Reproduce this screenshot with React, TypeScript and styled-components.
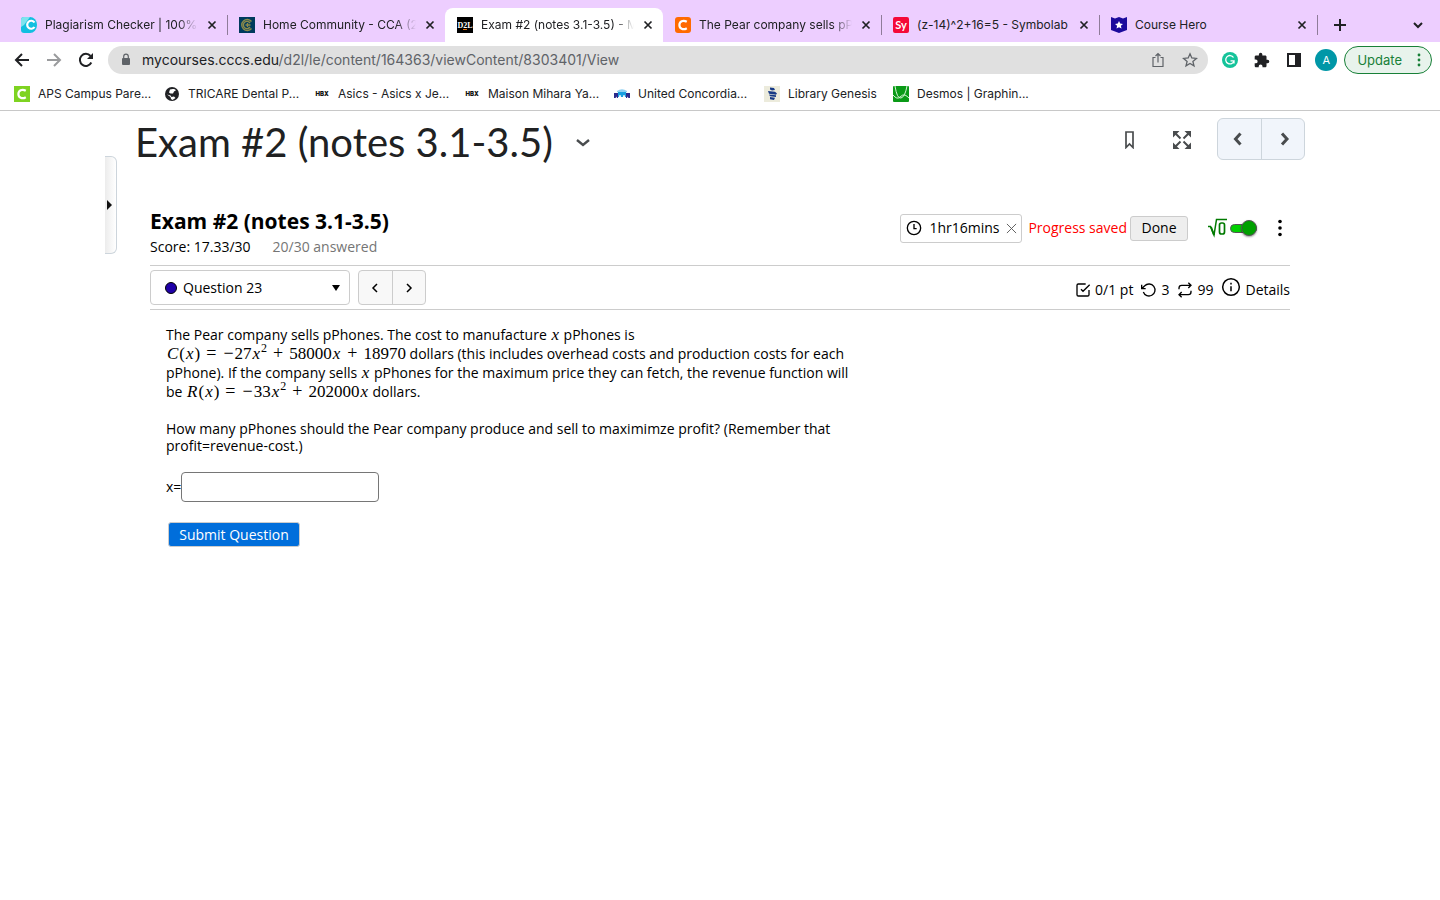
import React from "react";
import styled, { createGlobalStyle } from "styled-components";

const Global = createGlobalStyle`
  *, *::before, *::after { box-sizing: border-box; }
  body { margin: 0; background: #fff; color: #000; }
  button, input, select { font: inherit; color: inherit; margin: 0; }
  button { cursor: pointer; padding: 0; border: 0; background: none; }
  a { color: inherit; text-decoration: none; }
  svg { display: block; flex: none; }
`;

const UI_FONT = `Inter, sans-serif`;
const BODY_FONT = `"Trebuchet MS", "Open Sans", sans-serif`;

/* ---------- browser chrome ---------- */

const Chrome = styled.header`
  font-family: ${UI_FONT};
  font-size: 12px;
  line-height: 16px;
  color: #202124;
  border-bottom: 1px solid #c8c8c8;
`;

const TabStrip = styled.nav`
  display: flex;
  align-items: flex-end;
  height: 42px;
  padding: 8px 14px 0 9px;
  background: #edceff;
`;

const Tab = styled.div<{ $active?: boolean; $divider?: boolean }>`
  flex: 0 1 218px;
  min-width: 0;
  height: 34px;
  display: flex;
  align-items: center;
  gap: 8px;
  padding: 0 9px 0 12px;
  position: relative;
  background: ${(p) => (p.$active ? "#fff" : "transparent")};
  border-radius: 8px 8px 0 0;
  ${(p) =>
    p.$divider &&
    `&::after { content: ""; position: absolute; right: -1px; top: 7px; width: 1px; height: 20px; background: #8f7c99; }`}
`;

const TabTitle = styled.a<{ $fade?: boolean }>`
  flex: 1;
  min-width: 0;
  overflow: hidden;
  white-space: nowrap;
  ${(p) => p.$fade && `mask-image: linear-gradient(to right, #000 calc(100% - 20px), transparent);`}
`;

const TabClose = styled.button`
  width: 12px;
  height: 12px;
  display: grid;
  place-items: center;
`;

const StripButton = styled.button<{ $push?: boolean }>`
  width: 16px;
  height: 34px;
  margin-left: ${(p) => (p.$push ? "auto" : "15px")};
  display: grid;
  place-items: center;
`;

const Toolbar = styled.div`
  display: flex;
  align-items: center;
  height: 36px;
  padding: 0 8px 0 14px;
  gap: 16px;
`;

const Omnibox = styled.div`
  flex: 1;
  display: flex;
  align-items: center;
  height: 28px;
  margin: 0 -2px;
  padding: 0 10px;
  gap: 16px;
  border-radius: 14px;
  background: #e0e0e0;
`;

const Url = styled.span`
  flex: 1;
  margin-left: -8px;
  font-size: 14px;
  color: #5f6368;
  b { font-weight: 400; color: #202124; }
`;

const IconButton = styled.button`
  width: 16px;
  height: 16px;
  display: grid;
  place-items: center;
`;

const Avatar = styled.button`
  width: 22px;
  height: 22px;
  margin-left: -3px;
  border-radius: 50%;
  background: #0097a7;
  color: #fff;
  font-size: 11px;
`;

const UpdateButton = styled.button`
  display: flex;
  align-items: center;
  gap: 15px;
  height: 28px;
  margin-left: -9px;
  padding: 0 10px 0 12px;
  border: 1px solid #188038;
  border-radius: 14px;
  background: #e8f3ec;
  color: #188038;
  font-size: 13px;
`;

const Bookmarks = styled.nav`
  display: flex;
  align-items: center;
  gap: 16px;
  height: 32px;
  padding: 0 14px;
`;

const Bookmark = styled.a<{ $short?: boolean }>`
  width: ${(p) => (p.$short ? "113px" : "134px")};
  display: flex;
  align-items: center;
  gap: 8px;
  white-space: nowrap;
`;

/* ---------- page ---------- */

const Main = styled.main`
  position: relative;
  max-width: 1230px;
  margin: 0 auto;
  padding: 0 30px;
`;

const PanelHandle = styled.button`
  position: absolute;
  left: 0;
  top: 45px;
  width: 12px;
  height: 98px;
  display: flex;
  align-items: center;
  border: 1px solid #cdd5dc;
  border-left: 0;
  border-radius: 0 6px 6px 0;
  background: linear-gradient(to right, #ececec, #fff);
`;

const PageHeader = styled.div`
  display: flex;
  align-items: center;
  height: 62px;
`;

const PageTitle = styled.h1`
  margin: 0;
  font: 400 40px/48px Lato, sans-serif;
  color: #202122;
  white-space: nowrap;
`;

const TitleMenu = styled.button`
  margin-left: 22px;
`;

const PageActions = styled.div`
  margin-left: auto;
  display: flex;
  align-items: center;
  gap: 36px;
  padding-bottom: 6px;
`;

const Pager = styled.div`
  display: flex;
  height: 42px;
  margin-left: -8px;
  border: 1px solid #cdd5dc;
  border-radius: 6px;
  background: #f1f5fb;
  overflow: hidden;
`;

const PagerButton = styled.button`
  width: 43px;
  display: grid;
  place-items: center;
  & + & { border-left: 1px solid #cdd5dc; }
`;

const Assessment = styled.section`
  margin: 34px 15px 0;
  font-family: ${BODY_FONT};
  font-size: 14px;
  line-height: 18px;
`;

const AssessmentHeader = styled.div`
  display: flex;
  align-items: flex-start;
  height: 58px;
`;

const AssessmentTitle = styled.h2`
  margin: 0;
  font-size: 21px;
  line-height: 28px;
  font-weight: 700;
`;

const Score = styled.div`
  display: flex;
  gap: 22px;
  padding-top: 3px;
`;

const Muted = styled.span`
  color: #757575;
`;

const Status = styled.div`
  margin-left: auto;
  display: flex;
  align-items: center;
  height: 42px;
`;

const Timer = styled.div`
  display: flex;
  align-items: center;
  gap: 7px;
  height: 29px;
  width: 122px;
  padding: 0 8px 0 5px;
  margin-right: 6px;
  border: 1px solid #ccc;
  border-radius: 3px;
`;

const TimerClose = styled.button`
  margin-left: auto;
`;

const Saved = styled.span`
  color: #f00;
  margin-right: 3px;
`;

const DoneButton = styled.button`
  width: 58px;
  height: 25px;
  border: 1px solid #ccc;
  border-radius: 3px;
  background: #eee;
`;

const MathSwitch = styled.label`
  display: flex;
  align-items: center;
  gap: 3px;
  margin-left: 20px;
`;

const Switch = styled.input`
  appearance: none;
  position: relative;
  width: 27px;
  height: 9px;
  border: 1px solid #555;
  border-radius: 5px;
  background: #00d000;
  &::after {
    content: "";
    position: absolute;
    right: -1px;
    top: -5px;
    width: 16px;
    height: 16px;
    border: 1px solid #555;
    border-radius: 50%;
    background: #00a000;
    box-shadow: 0 1px 2px #0006;
  }
`;

const MoreButton = styled.button`
  margin: 0 8px 0 21px;
`;

const QuestionBar = styled.div`
  display: flex;
  align-items: center;
  height: 45px;
  border-top: 1px solid #ccc;
  border-bottom: 1px solid #ccc;
`;

const QuestionPicker = styled.label`
  display: flex;
  align-items: center;
  gap: 6px;
  width: 200px;
  height: 35px;
  padding: 0 9px 0 14px;
  border: 1px solid #ccc;
  border-radius: 4px;
`;

const QuestionSelect = styled.select`
  flex: 1;
  appearance: none;
  border: 0;
  padding: 0;
  background: none;
`;

const StepButtons = styled.div`
  display: flex;
  width: 68px;
  height: 35px;
  margin-left: 8px;
  border: 1px solid #ccc;
  border-radius: 4px;
  background: #f8f8f8;
  overflow: hidden;
`;

const StepButton = styled.button`
  flex: 1;
  display: grid;
  place-items: center;
  & + & { border-left: 1px solid #ccc; }
`;

const Facts = styled.div`
  margin-left: auto;
  display: flex;
  align-items: center;
  gap: 8px;
  padding-top: 5px;
`;

const Fact = styled.span`
  display: flex;
  align-items: center;
  gap: 4px;
`;

const DetailsButton = styled.button`
  display: flex;
  align-items: center;
  gap: 4px;
  svg { margin-bottom: 6px; }
`;

const Question = styled.form`
  padding: 15px 16px;
`;

const Statement = styled.p`
  margin: 0 0 19px;
  line-height: 19px;
  white-space: nowrap;
`;

const Ask = styled.p`
  margin: 0;
  line-height: 17px;
  white-space: nowrap;
`;

const Formula = styled.span`
  font: 17px/17px "Liberation Serif", serif;
  i { margin: 0 1px; }
  sup { font-size: 12px; line-height: 0; }
`;

const Op = styled.span<{ $unary?: boolean }>`
  margin: 0 ${(p) => (p.$unary ? "1px" : "6px")};
  font-size: 18px;
`;

const Answer = styled.label`
  display: flex;
  align-items: center;
  margin-top: 18px;
`;

const AnswerInput = styled.input`
  width: 198px;
  height: 30px;
  padding: 0 6px;
  border: 1px solid #767676;
  border-radius: 4px;
  background: #fff;
`;

const SubmitButton = styled.button`
  display: block;
  width: 132px;
  height: 25px;
  margin: 20px 2px 0;
  border: 1px solid #ccc;
  border-radius: 3px;
  background: #006edb;
  color: #fff;
`;

/* ---------- icons ---------- */

const Stroke = ({ d, size = 16, box = 24, w = 2, color = "currentColor" }: { d: string; size?: number; box?: number; w?: number; color?: string }) => (
  <svg width={size} height={size} viewBox={`0 0 ${box} ${box}`} fill="none" stroke={color} strokeWidth={w} aria-hidden="true">
    <path d={d} />
  </svg>
);

const Close = () => <Stroke d="M2.500 2.500l7 7M9.500 2.500l-7 7" size={12} box={12} w={1.700} />;

const Letter = ({ bg, text, size = 12, family = "Lato", r = 2, fill = "#fff" }: { bg: string; text: string; size?: number; family?: string; r?: number; fill?: string }) => (
  <svg width="16" height="16" viewBox="0 0 16 16" aria-hidden="true">
    <rect width="16" height="16" rx={r} fill={bg} />
    <text x="8" y={8 + size * 0.36} fontSize={size} fontFamily={family} fontWeight="700" fill={fill} textAnchor="middle">{text}</text>
  </svg>
);

const CBadge = ({ bg, r = 3 }: { bg: string; r?: number }) => (
  <svg width="16" height="16" viewBox="0 0 16 16" aria-hidden="true">
    <rect width="16" height="16" rx={r} fill={bg} />
    <path d="M11.800 4.800C8 2.500 4.400 4.500 4.400 8s3.600 5.500 7.400 3.200" fill="none" stroke="#fff" strokeWidth="2.200" />
  </svg>
);

const Plagiarism = () => (
  <svg width="16" height="16" viewBox="0 0 16 16" aria-hidden="true">
    <path d="M0 3a3 3 0 0 1 3-3h6a7 8 0 0 1 0 16H3a3 3 0 0 1-3-3z" fill="#12bfe0" />
    <path d="M0 3a3 3 0 0 1 3-3h6L3 8l-3 2z" fill="#7fe3ee" />
    <path d="M13.500 5.500A4 4 0 1 0 13.500 10" fill="none" stroke="#fff" strokeWidth="2.200" />
  </svg>
);

const Cca = () => (
  <svg width="16" height="16" viewBox="0 0 16 16" fill="none" aria-hidden="true">
    <rect width="16" height="16" fill="#003a5d" />
    <path d="M12.500 4.500a5.500 5.500 0 1 0 0 7M11 6a3.600 3.600 0 1 0 0 4M6.500 8h5M8.500 6v4" stroke="#8c8b4a" strokeWidth="1.400" />
  </svg>
);

const D2l = () => (
  <svg width="16" height="16" viewBox="0 0 16 16" aria-hidden="true">
    <rect width="16" height="16" fill="#000" />
    <text x="8" y="11" fontSize="8" fontFamily="Liberation Serif" fontWeight="700" fill="#fff" textAnchor="middle">D2L</text>
    <path d="M6 12.500h4" stroke="#e87511" />
  </svg>
);

const Hero = () => (
  <svg width="16" height="16" viewBox="0 0 16 16" aria-hidden="true">
    <path d="M0 0l4 1.500L8 0l4 1.500L16 0v13l-8 3-8-3z" fill="#1b0a9c" />
    <path d="M8 4l1.200 2.600 2.800.3-2.100 1.900.6 2.800L8 10.200l-2.500 1.400.6-2.800L4 6.900l2.800-.3z" fill="#fff" />
  </svg>
);

const Globe = () => (
  <svg width="16" height="16" viewBox="0 0 16 16" aria-hidden="true">
    <circle cx="8" cy="8" r="7" fill="#202124" />
    <path d="M6 3.500c2-1 5-.8 6 .7l-2 1.300-1 2H6.500L5 6.500zM3 8.500l3.500 1 1 1.500 2.500-.5 1.500 1.500-3 2-1.500-1-.5-2z" fill="#fff" />
  </svg>
);

const Hbx = () => (
  <svg width="16" height="16" viewBox="0 0 16 16" aria-hidden="true">
    <text x="8" y="10" fontSize="6" fontFamily="Inter" fontWeight="900" fill="#111" textAnchor="middle">HBX</text>
  </svg>
);

const Concordia = () => (
  <svg width="16" height="16" viewBox="0 0 16 16" aria-hidden="true">
    <path d="M3 5q5-3.500 10 0v1H3z" fill="#8fd0f2" />
    <path d="M4 6h8l1 5h-2l-.5-2H9.500L9 11H7l-.5-2H5.500L5 11H3z" fill="#189fe0" />
    <path d="M0 7h4v5H3L2.500 10.500 1.500 12H0zM12 7h4v5h-1.500l-1-1.500L13 12h-1z" fill="#2b2a8c" />
  </svg>
);

const Genesis = () => (
  <svg width="16" height="16" viewBox="0 0 16 16" aria-hidden="true">
    <rect width="16" height="16" fill="#ecebdc" />
    <path d="M6 1.500l4 .5 1 2-3 .5-2-1zM4 5l7 .8 2 1.700-1 1.200-7-1zM5 8.500l7 .8v1.700l-6-.7zM6 11l5 .8-1 2.200-4-.7z" fill="#173a86" />
  </svg>
);

const Desmos = () => (
  <svg width="16" height="16" viewBox="0 0 16 16" aria-hidden="true">
    <rect width="16" height="16" rx="1" fill="#0a9a17" />
    <path d="M2 0q2 13 6 12t6-12M0 9q4 5 7 2t5-2 4 3" fill="none" stroke="#d6f5d6" strokeWidth="1" />
  </svg>
);

/* ---------- data ---------- */

const tabs = [
  { title: "Plagiarism Checker | 100%", icon: <Plagiarism />, divider: true, fade: true },
  { title: "Home Community - CCA (2", icon: <Cca />, fade: true },
  { title: "Exam #2 (notes 3.1-3.5) - M", icon: <D2l />, active: true, fade: true },
  { title: "The Pear company sells pP", icon: <CBadge bg="#ff6a00" />, divider: true, fade: true },
  { title: "(z-14)^2+16=5 - Symbolab", icon: <Letter bg="#f50a37" text="Sy" size={11} />, divider: true },
  { title: "Course Hero", icon: <Hero />, divider: true },
];

const bookmarks = [
  { title: "APS Campus Pare...", icon: <CBadge bg="#7ed321" r={0} /> },
  { title: "TRICARE Dental P...", icon: <Globe /> },
  { title: "Asics - Asics x Je...", icon: <Hbx /> },
  { title: "Maison Mihara Ya...", icon: <Hbx /> },
  { title: "United Concordia...", icon: <Concordia /> },
  { title: "Library Genesis", icon: <Genesis />, short: true },
  { title: "Desmos | Graphin...", icon: <Desmos /> },
];

export default function App() {
  return (
    <>
      <Global />
      <Chrome>
        <TabStrip>
          {tabs.map((t) => (
            <Tab key={t.title} $active={t.active} $divider={t.divider}>
              {t.icon}
              <TabTitle href="#" $fade={t.fade}>{t.title}</TabTitle>
              <TabClose aria-label="Close tab"><Close /></TabClose>
            </Tab>
          ))}
          <StripButton aria-label="New tab"><Stroke d="M8 2v12M2 8h12" box={16} /></StripButton>
          <StripButton $push aria-label="Search tabs"><Stroke d="M4 6l4 4 4-4" box={16} /></StripButton>
        </TabStrip>
        <Toolbar>
          <IconButton aria-label="Back"><Stroke d="M15 8H2M8 2L2 8l6 6" box={16} /></IconButton>
          <IconButton aria-label="Forward"><Stroke d="M1 8h13M8 2l6 6-6 6" box={16} color="#9a9b9d" /></IconButton>
          <IconButton aria-label="Reload">
            <svg width="16" height="16" viewBox="0 0 16 16" fill="none" aria-hidden="true">
              <path d="M13.300 10.500A6 6 0 1 1 12.500 4" stroke="#202124" strokeWidth="2" />
              <path d="M15 1v6H9z" fill="#202124" />
            </svg>
          </IconButton>
          <Omnibox>
            <svg width="16" height="16" viewBox="0 0 16 16" aria-hidden="true">
              <rect x="4" y="6" width="8" height="7" rx="1" fill="#5f6368" />
              <path d="M5.700 6.500V4.500a2.300 2.300 0 0 1 4.600 0v2" fill="none" stroke="#5f6368" strokeWidth="1.200" />
            </svg>
            <Url><b>mycourses.cccs.edu</b>/d2l/le/content/164363/viewContent/8303401/View</Url>
            <IconButton aria-label="Share"><Stroke d="M5.500 5.500H3v9h10v-9h-2.500M8 10.500V2M5.500 4L8 1.500 10.500 4" box={16} w={1.200} color="#5f6368" /></IconButton>
            <IconButton aria-label="Bookmark this page"><Stroke d="M8 1.800l1.800 4.200 4.600.4-3.500 3 1.100 4.500-4-2.400-4 2.400 1.100-4.500-3.500-3 4.600-.4z" box={16} w={1.300} color="#5f6368" /></IconButton>
          </Omnibox>
          <IconButton aria-label="Grammarly">
            <svg width="16" height="16" viewBox="0 0 16 16" fill="none" aria-hidden="true">
              <circle cx="8" cy="8" r="8" fill="#15c39a" />
              <path d="M11.500 5.500a4.200 4.200 0 1 0 .5 3.300H8.500M12 8.500v3" stroke="#fff" strokeWidth="1.300" />
            </svg>
          </IconButton>
          <IconButton aria-label="Extensions">
            <svg width="16" height="16" viewBox="1 0 23 23" fill="#202124" aria-hidden="true">
              <path d="M20.500 11H19V7c0-1.100-.9-2-2-2h-4V3.500a2.500 2.500 0 0 0-5 0V5H4c-1.100 0-2 .9-2 2v3.800h1.500a2.700 2.700 0 0 1 0 5.400H2V20c0 1.100.9 2 2 2h3.800v-1.500a2.700 2.700 0 0 1 5.400 0V22H17c1.100 0 2-.9 2-2v-4h1.500a2.500 2.500 0 0 0 0-5z" />
            </svg>
          </IconButton>
          <IconButton aria-label="Side panel">
            <svg width="16" height="16" viewBox="0 0 16 16" aria-hidden="true">
              <path d="M1 1h14v14H1zM3 3v10h6V3z" fillRule="evenodd" fill="#202124" />
            </svg>
          </IconButton>
          <Avatar aria-label="Profile">A</Avatar>
          <UpdateButton>
            Update
            <svg width="4" height="14" viewBox="0 0 4 14" fill="#188038" aria-hidden="true">
              <circle cx="2" cy="2" r="1.400" /><circle cx="2" cy="7" r="1.400" /><circle cx="2" cy="12" r="1.400" />
            </svg>
          </UpdateButton>
        </Toolbar>
        <Bookmarks>
          {bookmarks.map((b) => (
            <Bookmark key={b.title} href="#" $short={b.short}>{b.icon}{b.title}</Bookmark>
          ))}
        </Bookmarks>
      </Chrome>

      <Main>
        <PanelHandle aria-label="Open side panel">
          <svg width="7" height="10" viewBox="0 0 7 10" aria-hidden="true"><path d="M2 0l5 5-5 5z" fill="#111" /></svg>
        </PanelHandle>
        <PageHeader>
          <PageTitle>Exam #2 (notes 3.1-3.5)</PageTitle>
          <TitleMenu aria-label="Topic menu"><Stroke d="M2 6l6 5 6-5" box={16} w={2.400} color="#494c4e" /></TitleMenu>
          <PageActions>
            <IconButton aria-label="Bookmark">
              <svg width="9" height="18" viewBox="0 0 9 18" fill="none" stroke="#494c4e" strokeWidth="1.700" aria-hidden="true">
                <path d="M1 1h7v15.500L4.500 13 1 16.500z" />
              </svg>
            </IconButton>
            <IconButton aria-label="Full screen">
              <svg width="18" height="18" viewBox="0 0 18 18" fill="#494c4e" stroke="#494c4e" aria-hidden="true">
                <path d="M0 0h6.500L0 6.500zM18 0v6.500L11.500 0zM0 18v-6.500L6.500 18zM18 18h-6.500l6.500-6.500z" stroke="none" />
                <path d="M2 2l5.500 5.500M16 2l-5.500 5.500M2 16l5.500-5.500M16 16l-5.500-5.500" strokeWidth="2" />
              </svg>
            </IconButton>
            <Pager>
              <PagerButton aria-label="Previous"><Stroke d="M8.500 2.500L3.500 8l5 5.500" box={16} w={3} color="#494c4e" /></PagerButton>
              <PagerButton aria-label="Next"><Stroke d="M7 2.500l5 5.500-5 5.500" box={16} w={3} color="#494c4e" /></PagerButton>
            </Pager>
          </PageActions>
        </PageHeader>

        <Assessment>
          <AssessmentHeader>
            <div>
              <AssessmentTitle>Exam #2 (notes 3.1-3.5)</AssessmentTitle>
              <Score><span>Score: 17.33/30</span><Muted>20/30 answered</Muted></Score>
            </div>
            <Status>
              <Timer>
                <Stroke d="M12 2a10 10 0 1 0 0 20a10 10 0 1 0 0-20M12 6v7h4" />
                <span>1hr16mins</span>
                <TimerClose aria-label="Hide timer"><Stroke d="M1 1l10 10M11 1L1 11" size={11} box={12} w={1} color="#555" /></TimerClose>
              </Timer>
              <Saved>Progress saved</Saved>
              <DoneButton>Done</DoneButton>
              <MathSwitch>
                <svg width="19" height="20" viewBox="0 0 19 20" fill="none" stroke="#007a00" aria-hidden="true">
                  <path d="M0 8.500h2.500L6 17 8.500 1.500H19" strokeWidth="1.500" />
                  <path d="M3 9l3 8" strokeWidth="2" />
                  <rect x="11.500" y="5" width="5" height="11" rx="2" strokeWidth="1.700" />
                </svg>
                <Switch type="checkbox" defaultChecked aria-label="Equation editor" />
              </MathSwitch>
              <MoreButton aria-label="More options">
                <svg width="4" height="18" viewBox="0 0 4 18" aria-hidden="true">
                  <circle cx="2" cy="2.500" r="1.800" /><circle cx="2" cy="9" r="1.800" /><circle cx="2" cy="15.500" r="1.800" />
                </svg>
              </MoreButton>
            </Status>
          </AssessmentHeader>

          <QuestionBar>
            <QuestionPicker>
              <svg width="12" height="12" viewBox="0 0 12 12" aria-hidden="true"><circle cx="6" cy="6" r="5.500" fill="#1f00a8" stroke="#000" /></svg>
              <QuestionSelect aria-label="Question"><option>Question 23</option></QuestionSelect>
              <svg width="8" height="6" viewBox="0 0 8 6" aria-hidden="true"><path d="M0 0h8L4 6z" /></svg>
            </QuestionPicker>
            <StepButtons>
              <StepButton aria-label="Previous question"><Stroke d="M8 2L4 6l4 4" size={12} box={12} w={1.500} /></StepButton>
              <StepButton aria-label="Next question"><Stroke d="M4 2l4 4-4 4" size={12} box={12} w={1.500} /></StepButton>
            </StepButtons>
            <Facts>
              <Fact><Stroke d="M9 11l3 3L22 4M21 12v7a2 2 0 0 1-2 2H5a2 2 0 0 1-2-2V5a2 2 0 0 1 2-2h11" />0/1 pt</Fact>
              <Fact><Stroke d="M1 4v6h6M3.500 15a9 9 0 1 0 2.100-9.400L1 10" />3</Fact>
              <Fact><Stroke d="M17 1l4 4-4 4M3 11V9a4 4 0 0 1 4-4h14M7 23l-4-4 4-4M21 13v2a4 4 0 0 1-4 4H3" />99</Fact>
              <DetailsButton type="button"><Stroke d="M12 2a10 10 0 1 0 0 20a10 10 0 1 0 0-20M12 17v-6M12 7v2" size={20} w={1.800} />Details</DetailsButton>
            </Facts>
          </QuestionBar>

          <Question onSubmit={(e) => e.preventDefault()}>
            <Statement>
              The Pear company sells pPhones. The cost to manufacture <Formula><i>x</i></Formula> pPhones is<br />
              <Formula><i>C</i>(<i>x</i>)<Op>=</Op><Op $unary>−</Op>27<i>x</i><sup>2</sup><Op>+</Op>58000<i>x</i><Op>+</Op>18970</Formula> dollars (this includes overhead costs and production costs for each<br />
              pPhone). If the company sells <Formula><i>x</i></Formula> pPhones for the maximum price they can fetch, the revenue function will<br />
              be <Formula><i>R</i>(<i>x</i>)<Op>=</Op><Op $unary>−</Op>33<i>x</i><sup>2</sup><Op>+</Op>202000<i>x</i></Formula> dollars.
            </Statement>
            <Ask>
              How many pPhones should the Pear company produce and sell to maximimze profit? (Remember that<br />
              profit=revenue-cost.)
            </Ask>
            <Answer>x=<AnswerInput type="text" /></Answer>
            <SubmitButton type="submit">Submit Question</SubmitButton>
          </Question>
        </Assessment>
      </Main>
    </>
  );
}
